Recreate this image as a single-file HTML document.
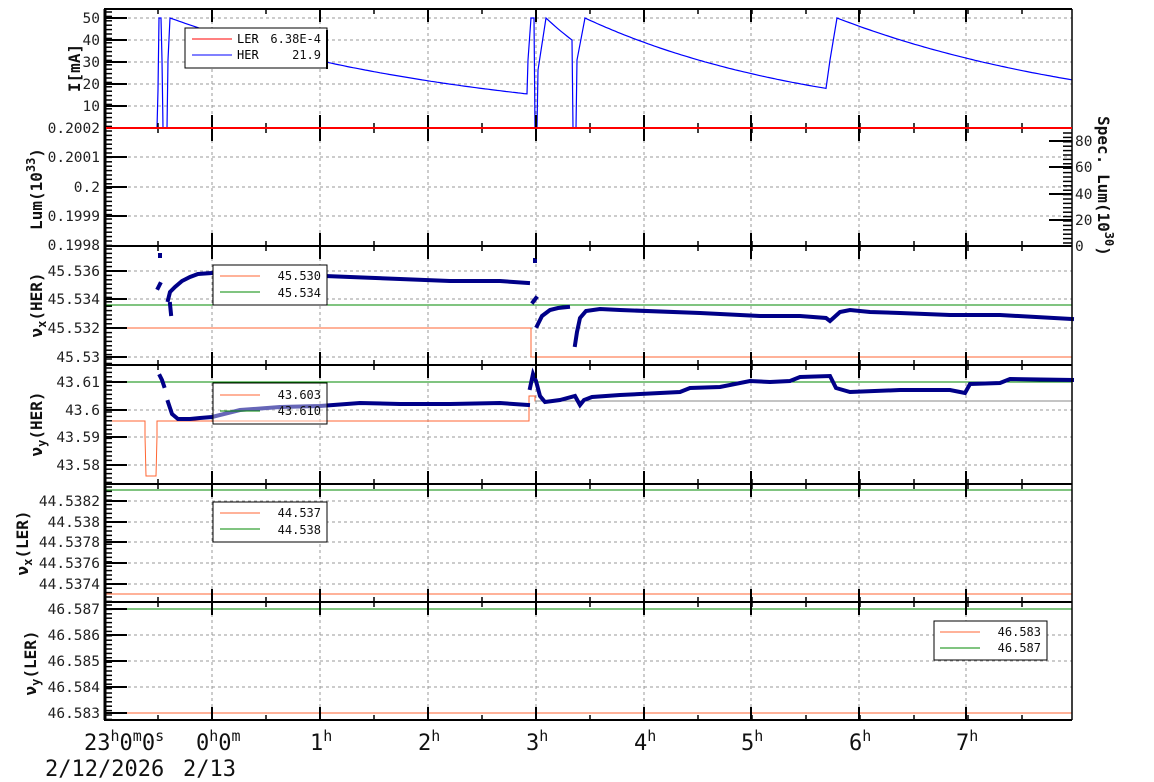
<!DOCTYPE html>
<html><head><meta charset="utf-8"><style>
html,body{margin:0;padding:0;background:#fff;}
svg{display:block;font-family:"DejaVu Sans Mono","Liberation Mono",monospace;}
.tl{font-size:14.5px;fill:#222;text-anchor:end;}
.yt{font-size:16px;font-weight:bold;fill:#111;text-anchor:middle;}
.lg{font-size:12px;fill:#111;text-anchor:end;}
.xl{font-size:22px;fill:#111;}
</style></head><body>
<svg id="s" width="1154" height="782" viewBox="0 0 1154 782" xmlns="http://www.w3.org/2000/svg">
<g id="grid"></g>
<!-- panel 1 current -->
<polyline id="cur" fill="none" stroke="#00f" stroke-width="1.2" points=""/>
<!-- panel 3 -->
<line x1="104" y1="305" x2="1072" y2="305" stroke="#080" stroke-width="1"/>
<polyline fill="none" stroke="#f63" stroke-width="1" points="104,328 531,328 531,357 1072,357"/>
<g fill="none" stroke="#008" stroke-width="4" stroke-linecap="square">
<polyline points="158,288 160,284"/><polyline points="160,255 160,256"/>
<polyline points="168,300 170,292 175,287 182,281 190,277 198,274 212,273 230,272 260,273 300,275 350,277 400,279 450,281 500,281 528,283"/>
<polyline points="170,304 171,314"/>
<polyline points="533,302 536,298"/><polyline points="535,260 535,261"/>
<polyline points="537,326 542,316 550,310 558,308 568,307"/>
<polyline points="575,345 577,332 580,318 586,311 600,309 620,310 700,313 760,316 800,316 826,318 830,321 840,312 850,310 870,312 900,313 950,315 1000,315 1072,319"/>
</g>
<!-- panel 4 -->
<line x1="104" y1="382" x2="1072" y2="382" stroke="#080" stroke-width="1"/>
<polyline fill="none" stroke="#f63" stroke-width="1" points="104,421 145,421 145,436 146,476 156,476 157,436 157,421 529,421 529,396 535,396 535,401 1072,401"/>
<polyline fill="none" stroke="#888" stroke-width="1" points="535,401 1072,401"/>
<g fill="none" stroke="#008" stroke-width="4" stroke-linecap="square">
<polyline points="160,376 162,380 164,386"/>
<polyline points="168,402 172,414 178,419 190,419 200,418 212,417 240,410 280,407 320,406 360,403 400,404 450,404 500,403 528,405"/>
<polyline points="530,388 533,374 536,381 540,396 545,402 560,400 575,396 580,405 584,400 592,397 620,395 680,392 690,388 720,387 750,381 770,382 790,381 800,377 830,376 836,388 850,392 900,390 950,390 965,393 970,384 1000,383 1010,379 1072,380"/>
</g>
<!-- panel 5 -->
<line x1="104" y1="490" x2="1072" y2="490" stroke="#080" stroke-width="1"/>
<line x1="104" y1="594" x2="1072" y2="594" stroke="#f63" stroke-width="1"/>
<!-- panel 6 -->
<line x1="104" y1="609" x2="1072" y2="609" stroke="#080" stroke-width="1"/>
<line x1="104" y1="713" x2="1072" y2="713" stroke="#f63" stroke-width="1"/>
<g id="frames"></g>
<line x1="106" y1="128" x2="1072" y2="128" stroke="#f00" stroke-width="2"/>
<!-- tick labels -->
<g class="tl">
<text x="100" y="23">50</text><text x="100" y="45">40</text><text x="100" y="67">30</text><text x="100" y="89">20</text><text x="100" y="111">10</text>
<text x="100" y="133">0.2002</text><text x="100" y="162">0.2001</text><text x="100" y="192">0.2</text><text x="100" y="221">0.1999</text><text x="100" y="250">0.1998</text>
<text x="100" y="276">45.536</text><text x="100" y="304">45.534</text><text x="100" y="333">45.532</text><text x="100" y="362">45.53</text>
<text x="100" y="387">43.61</text><text x="100" y="415">43.6</text><text x="100" y="442">43.59</text><text x="100" y="470">43.58</text>
<text x="100" y="506">44.5382</text><text x="100" y="527">44.538</text><text x="100" y="547">44.5378</text><text x="100" y="568">44.5376</text><text x="100" y="589">44.5374</text>
<text x="100" y="614">46.587</text><text x="100" y="640">46.586</text><text x="100" y="666">46.585</text><text x="100" y="692">46.584</text><text x="100" y="718">46.583</text>
</g>
<g style="font-size:14.5px;fill:#222">
<text x="1075" y="146">80</text><text x="1075" y="172">60</text><text x="1075" y="199">40</text><text x="1075" y="225">20</text><text x="1075" y="251">0</text>
</g>
<!-- axis titles -->
<text class="yt" transform="translate(80,68) rotate(-90)">I[mA]</text>
<text class="yt" transform="translate(42,189) rotate(-90)">Lum(10<tspan dy="-7" font-size="12">33</tspan><tspan dy="7">)</tspan></text>
<text class="yt" transform="translate(42,305) rotate(-90)">ν<tspan dy="4" font-size="12">x</tspan><tspan dy="-4">(HER)</tspan></text>
<text class="yt" transform="translate(42,424) rotate(-90)">ν<tspan dy="4" font-size="12">y</tspan><tspan dy="-4">(HER)</tspan></text>
<text class="yt" transform="translate(28,543) rotate(-90)">ν<tspan dy="4" font-size="12">x</tspan><tspan dy="-4">(LER)</tspan></text>
<text class="yt" transform="translate(36,663) rotate(-90)">ν<tspan dy="4" font-size="12">y</tspan><tspan dy="-4">(LER)</tspan></text>
<text class="yt" transform="translate(1098,186) rotate(90)">Spec. Lum(10<tspan dy="-7" font-size="12">30</tspan><tspan dy="7">)</tspan></text>
<!-- legends -->
<g>
<rect x="185" y="28" width="142" height="40" fill="#fff" stroke="#000" stroke-width="1"/><line x1="327" y1="30" x2="327" y2="69" stroke="#000" stroke-width="2"/>
<line x1="192" y1="39" x2="232" y2="39" stroke="#f00"/><text x="237" y="43" style="font-size:12px">LER</text><text class="lg" x="321" y="43">6.38E-4</text>
<line x1="192" y1="55" x2="232" y2="55" stroke="#00f"/><text x="237" y="59" style="font-size:12px">HER</text><text class="lg" x="321" y="59">21.9</text>
</g>
<g>
<rect x="213" y="265" width="114" height="40" fill="#fff" stroke="#000"/>
<line x1="220" y1="276" x2="260" y2="276" stroke="#f63"/><text class="lg" x="321" y="280">45.530</text>
<line x1="220" y1="292" x2="260" y2="292" stroke="#080"/><text class="lg" x="321" y="297">45.534</text>
</g>
<g>
<rect x="213" y="383" width="114" height="41" fill="#fff" fill-opacity="0.4" stroke="#000"/>
<line x1="220" y1="395" x2="260" y2="395" stroke="#f63"/><text class="lg" x="321" y="399">43.603</text>
<line x1="220" y1="411" x2="260" y2="411" stroke="#080"/><text class="lg" x="321" y="415">43.610</text>
</g>
<g>
<rect x="213" y="502" width="114" height="40" fill="#fff" stroke="#000"/>
<line x1="220" y1="513" x2="260" y2="513" stroke="#f63"/><text class="lg" x="321" y="517">44.537</text>
<line x1="220" y1="529" x2="260" y2="529" stroke="#080"/><text class="lg" x="321" y="534">44.538</text>
</g>
<g>
<rect x="934" y="621" width="113" height="39" fill="#fff" stroke="#000"/>
<line x1="940" y1="632" x2="980" y2="632" stroke="#f63"/><text class="lg" x="1041" y="636">46.583</text>
<line x1="940" y1="648" x2="980" y2="648" stroke="#080"/><text class="lg" x="1041" y="652">46.587</text>
</g>
<!-- x labels -->
<g class="xl">
<text x="84" y="750">23<tspan dy="-9" font-size="15">h</tspan><tspan dy="9">0</tspan><tspan dy="-9" font-size="15">m</tspan><tspan dy="9">0</tspan><tspan dy="-9" font-size="15">s</tspan></text>
<text x="196" y="750">0<tspan dy="-9" font-size="15">h</tspan><tspan dy="9">0</tspan><tspan dy="-9" font-size="15">m</tspan></text>
<text x="310" y="750">1<tspan dy="-9" font-size="15">h</tspan></text>
<text x="418" y="750">2<tspan dy="-9" font-size="15">h</tspan></text>
<text x="526" y="750">3<tspan dy="-9" font-size="15">h</tspan></text>
<text x="634" y="750">4<tspan dy="-9" font-size="15">h</tspan></text>
<text x="741" y="750">5<tspan dy="-9" font-size="15">h</tspan></text>
<text x="849" y="750">6<tspan dy="-9" font-size="15">h</tspan></text>
<text x="956" y="750">7<tspan dy="-9" font-size="15">h</tspan></text>
<text x="45" y="776">2/12/2026</text><text x="183" y="776">2/13</text>
</g>
</svg>
<script>
(function(){
var NS="http://www.w3.org/2000/svg";
var grid=document.getElementById("grid"),fr=document.getElementById("frames");
function L(g,x1,y1,x2,y2,c,w,d){var l=document.createElementNS(NS,"line");l.setAttribute("x1",x1);l.setAttribute("y1",y1);l.setAttribute("x2",x2);l.setAttribute("y2",y2);l.setAttribute("stroke",c);l.setAttribute("stroke-width",w);if(d)l.setAttribute("stroke-dasharray",d);g.appendChild(l);}
// current curve
var pts=["104,128","157,128","158,90","159,18","161,18","162,60","163,128","167,128","168,60"];
function Y(I){return (128-2.2*I).toFixed(1);}
function dec(x0,x1,I1){var k=Math.log(50/I1)/(x1-x0);for(var x=x0;x<=x1;x+=3)pts.push(x+","+Y(50*Math.exp(-k*(x-x0))));pts.push(x1+","+Y(I1));}
dec(170,527,15.5);
pts.push("528,60","531,18","534,18","535,128","537,128","538,70");
dec(546,572,40);
pts.push("573,128","576,128","577,60");
dec(585,826,18);
pts.push("830,60");
dec(837,1072,21.9);
document.getElementById("cur").setAttribute("points",pts.join(" "));
var P=[[9,128,[18,40,62,84,106]],[128,246,[157,187,216]],[246,365,[271,299,328,357]],[365,484,[382,410,437,465]],[484,602,[501,522,542,563,584]],[602,720,[609,635,661,687,713]]];
var hrs=[212,320,428,536,644,751,859,966];
P.forEach(function(p){
 var t=p[0],b=p[1];
 hrs.forEach(function(x){L(grid,x,t,x,b,"#999",1,"3,3");});
 p[2].forEach(function(y){L(grid,104,y,1072,y,"#999",1,"3,3");});
 L(fr,104,t,1072,t,"#000",2);L(fr,104,b,1072,b,"#000",2);
 L(fr,105,t,105,b,"#000",3);L(fr,1072,t,1072,b,"#000",1.5);
 p[2].forEach(function(y){L(fr,104,y,127,y,"#000",2);});
 for(var y=t+3;y<b;y+=4.4)L(fr,104,y,112,y,"#000",1.5);
 hrs.forEach(function(x){L(fr,x,b,x,b-13,"#000",2);L(fr,x,t,x,t+13,"#000",2);});
 for(var x=158;x<1072;x+=54){ if(hrs.indexOf(Math.round(x))<0){L(fr,x,b,x,b-5,"#000",1.5);L(fr,x,t,x,t+5,"#000",1.5);} }
});
[141,167,194,220,246].forEach(function(y){L(fr,1049,y,1072,y,"#000",2);});
for(var y=133;y<246;y+=4.4)L(fr,1063,y,1072,y,"#000",1.5);
})();
</script>
</body></html>
